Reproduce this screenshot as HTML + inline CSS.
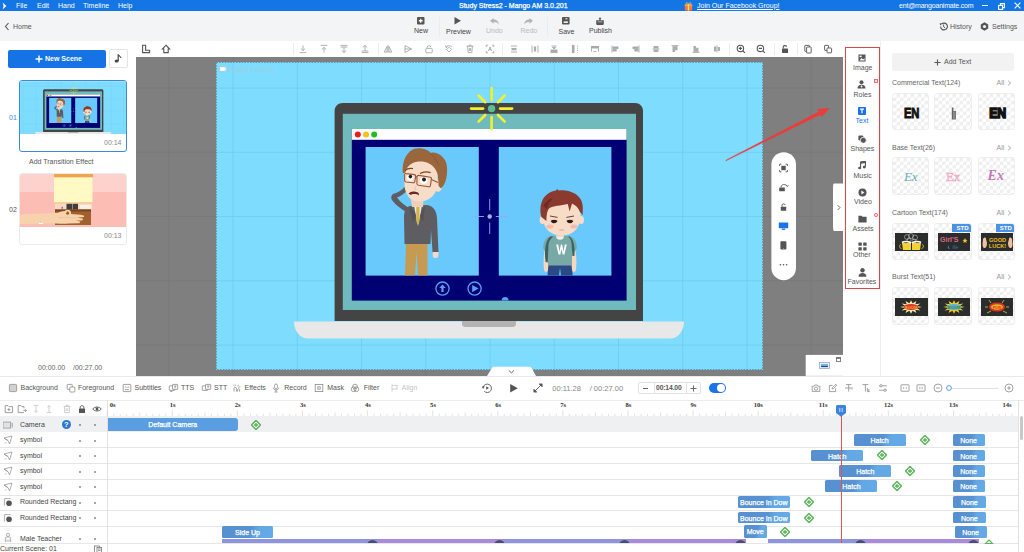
<!DOCTYPE html>
<html><head><meta charset="utf-8">
<style>
*{margin:0;padding:0;box-sizing:border-box}
html,body{width:1024px;height:552px;overflow:hidden;background:#fff;font-family:"Liberation Sans",sans-serif;color:#333}
.a{position:absolute}
.t{position:absolute;white-space:nowrap;line-height:1;margin-top:-0.5px}
#title{left:0;top:0;width:1024px;height:11px;background:#1475e5}
#title .t{color:#fff;font-size:7px;top:2px}
#tb{left:0;top:11px;width:1024px;height:30px;background:#f3f4f6}
#lp{left:0;top:41px;width:136px;height:335px;background:#fff}
#ctb{left:136px;top:41px;width:707px;height:16px;background:#fff}
#canvas{left:136px;top:57px;width:707px;height:319px;background:#7f7f7f;overflow:hidden}
#cat{left:843px;top:41px;width:37px;height:335px;background:#fff}
#lib{left:880px;top:41px;width:144px;height:335px;background:#fff;box-shadow:inset 0.8px 0 0 #ececec}
#ttb{left:0;top:376px;width:1024px;height:24px;background:#fff;box-shadow:inset 0 0.8px 0 #e4e4e4}
#tl{left:0;top:400px;width:1024px;height:152px;background:#fff;box-shadow:inset 0 0.8px 0 #e6e6e6}
.tile{width:37.3px;height:37.2px;border-radius:3px;overflow:hidden;border:0.5px solid #efefef;
background-color:#fff;background-image:linear-gradient(45deg,#eeeeee 25%,transparent 25%,transparent 75%,#eeeeee 75%),linear-gradient(45deg,#eeeeee 25%,transparent 25%,transparent 75%,#eeeeee 75%);background-size:7px 7px;background-position:0 0,3.5px 3.5px}
.std{left:17px;top:0;width:20.3px;height:8.6px;background:#4b92e3;color:#fff;font-size:6px;font-weight:bold;line-height:8.6px;text-align:center;border-radius:0 3px 0 0}
.bar{background:linear-gradient(105deg,#5890d0 0%,#5892d2 55%,#63a8e5 68%,#64aae6 100%);color:#fff;font-size:7px;-webkit-text-stroke:0.25px #fff;text-align:center;white-space:nowrap;overflow:hidden;border-radius:1.5px}
.cam{background:#5a9de1;border-radius:0 3px 3px 0}
</style></head><body>
<div id="title" class="a">
  <div class="t" style="left:16px">File</div>
  <div class="t" style="left:37px">Edit</div>
  <div class="t" style="left:58px">Hand</div>
  <div class="t" style="left:83px">Timeline</div>
  <div class="t" style="left:118px">Help</div>
  <div class="t" style="left:459px;-webkit-text-stroke:0.25px #fff">Study Stress2 - Mango AM 3.0.201</div>
  <div class="t" style="left:697px;text-decoration:underline">Join Our Facebook Group!</div>
  <div class="t" style="left:899px;letter-spacing:-0.2px">ent@mangoanimate.com</div>
  <svg class="a" style="left:2px;top:1.5px" width="5" height="8" viewBox="0 0 5 8"><path d="M0.6 0.4L4.4 4L0.6 7.6L1.6 4Z" fill="#fff"/></svg>
  <svg class="a" style="left:684px;top:0.5px" width="9" height="10" viewBox="0 0 9 10"><rect x="0.8" y="3.2" width="7.4" height="6.4" rx="1" fill="#f07a3a"/><rect x="0.8" y="3.2" width="7.4" height="2" fill="#f59a55"/><rect x="3.8" y="3" width="1.4" height="6.6" fill="#fce070"/><path d="M4.5 3C3 0.8 1.6 1.4 2.4 3M4.5 3C6 0.8 7.4 1.4 6.6 3" fill="none" stroke="#f7c040" stroke-width="0.8"/></svg>
  <div class="a" style="left:982px;top:5px;width:6.4px;height:1.1px;background:#fff"></div>
  <svg class="a" style="left:997.5px;top:2.5px" width="7" height="7" viewBox="0 0 7 7"><rect x="0.6" y="2.4" width="4" height="4" fill="none" stroke="#fff" stroke-width="1.1"/><path d="M2.4 2.4V0.6H6.4V4.6H4.6" fill="none" stroke="#fff" stroke-width="1.1"/></svg>
  <svg class="a" style="left:1014px;top:2.2px" width="7" height="7" viewBox="0 0 7 7"><path d="M0.6 0.6L6.4 6.4M6.4 0.6L0.6 6.4" stroke="#fff" stroke-width="1.2"/></svg>
</div>
<div id="tb" class="a">
  <svg class="a" style="left:4px;top:11px" width="6" height="9" viewBox="0 0 6 9"><path d="M4.5 1 L1.5 4.5 L4.5 8" fill="none" stroke="#555" stroke-width="1.1"/></svg>
  <div class="t" style="left:13px;top:12.5px;font-size:7px;color:#555">Home</div>
  <!-- New -->
  <svg class="a" style="left:417px;top:6px" width="8" height="8" viewBox="0 0 8 8"><rect x="0" y="0" width="7.5" height="7.5" rx="1" fill="#555"/><path d="M3.75 1.8V5.7M1.8 3.75H5.7" stroke="#fff" stroke-width="1.3"/></svg>
  <div class="t" style="left:414px;top:16.5px;font-size:7px;color:#444">New</div>
  <div class="a" style="left:439px;top:6px;width:1px;height:20px;background:#ebecef"></div>
  <svg class="a" style="left:454px;top:6px" width="8" height="8" viewBox="0 0 8 8"><path d="M0.5 0 L7 3.8 L0.5 7.6Z" fill="#555"/></svg>
  <div class="t" style="left:446px;top:17px;font-size:7px;color:#444">Preview</div>
  <svg class="a" style="left:490px;top:7px" width="9" height="7" viewBox="0 0 9 7"><path d="M0 2.8 L3.6 0 L3.6 1.6 C6.5 1.6 8.6 3 8.8 6.8 C7.8 4.8 6.3 4.1 3.6 4.1 L3.6 5.7Z" fill="#b4b4b4"/></svg>
  <div class="t" style="left:486px;top:16.5px;font-size:7px;color:#bbb">Undo</div>
  <svg class="a" style="left:524px;top:7px" width="9" height="7" viewBox="0 0 9 7"><path d="M9 2.8 L5.4 0 L5.4 1.6 C2.5 1.6 0.4 3 0.2 6.8 C1.2 4.8 2.7 4.1 5.4 4.1 L5.4 5.7Z" fill="#b4b4b4"/></svg>
  <div class="t" style="left:520.5px;top:16.5px;font-size:7px;color:#bbb">Redo</div>
  <div class="a" style="left:547px;top:6px;width:1px;height:20px;background:#ebecef"></div>
  <svg class="a" style="left:562px;top:5.8px" width="8" height="8" viewBox="0 0 8 8"><rect x="0" y="0" width="7.6" height="7.6" rx="1.1" fill="#555"/><rect x="1.7" y="4.4" width="4.2" height="1.5" fill="#fff"/><rect x="3.4" y="1" width="2" height="1.4" fill="#fff" opacity="0.7"/></svg>
  <div class="t" style="left:558.5px;top:17px;font-size:7px;color:#444">Save</div>
  <svg class="a" style="left:596px;top:6px" width="8" height="8" viewBox="0 0 8 8"><path d="M4 0.2L5.6 1.8H4.7V3.6H3.3V1.8H2.4Z" fill="#555"/><path d="M0.2 3.2H7.8V6.4C7.8 7.4 7.2 7.9 6.2 7.9H1.8C0.8 7.9 0.2 7.4 0.2 6.4Z" fill="#555"/><rect x="1.6" y="4.4" width="4.8" height="0.9" fill="#fff" opacity="0.6"/></svg>
  <div class="t" style="left:589px;top:16.5px;font-size:7px;color:#444">Publish</div>
  <!-- History / Settings -->
  <svg class="a" style="left:939px;top:11px" width="9" height="9" viewBox="0 0 9 9"><path d="M1.6 4.5 A3.4 3.4 0 1 0 2.6 2.1" fill="none" stroke="#555" stroke-width="1.1"/><path d="M0.6 1.2 L3.2 1.6 L1.4 3.6Z" fill="#555"/><path d="M4.6 2.6V4.7L6 5.8" fill="none" stroke="#555" stroke-width="1"/></svg>
  <div class="t" style="left:950px;top:12.3px;font-size:7px;color:#555">History</div>
  <svg class="a" style="left:980px;top:11px" width="9" height="9" viewBox="0 0 9 9"><path d="M4.5 0.3 L8.2 2.4 V6.6 L4.5 8.7 L0.8 6.6 V2.4Z" fill="#555"/><circle cx="4.5" cy="4.5" r="1.6" fill="#f3f4f6"/></svg>
  <div class="t" style="left:992px;top:12.3px;font-size:7px;color:#555">Settings</div>
</div>
<div id="lp" class="a">
  <div class="a" style="left:8px;top:9px;width:98px;height:17.6px;background:#1673e5;border-radius:2px"></div>
  <svg class="a" style="left:35px;top:13.5px" width="8" height="8" viewBox="0 0 8 8"><path d="M4 0.5V7.5M0.5 4H7.5" stroke="#fff" stroke-width="1.4"/></svg>
  <div class="t" style="left:45px;top:14.5px;font-size:7px;color:#fff;font-weight:bold">New Scene</div>
  <div class="a" style="left:109px;top:8px;width:19px;height:19px;background:#fff;border:1px solid #e4e4e4;border-radius:2px"></div>
  <svg class="a" style="left:114px;top:13px" width="8" height="9" viewBox="0 0 8 9"><path d="M4.2 0.5 C4.8 2 6.8 2.4 7 4" fill="none" stroke="#444" stroke-width="1.1"/><path d="M4.2 0.5V7" stroke="#444" stroke-width="1.2"/><ellipse cx="2.6" cy="7" rx="2" ry="1.6" fill="#444"/></svg>
  <div class="t" style="left:9px;top:73px;font-size:7px;color:#3a86e0">01</div>
  <div class="a" style="left:19px;top:39px;width:108px;height:72px;border:1px solid #3d89e0;border-radius:3px;overflow:hidden;background:#fff">
    <svg class="a" style="left:0;top:0" width="106" height="53" viewBox="216.7 62.8 542 267"><use href="#stage"/></svg>
    <div class="t" style="left:84px;top:58.5px;font-size:7px;color:#888">00:14</div>
  </div>
  <div class="t" style="left:29px;top:117.30px;font-size:7px;color:#555">Add Transition Effect</div>
  <div class="t" style="left:9px;top:165.5px;font-size:7px;color:#555">02</div>
  <div class="a" style="left:19px;top:132px;width:108px;height:72px;border:1px solid #ebebeb;border-radius:3px;overflow:hidden;background:#fff">
    <svg class="a" style="left:0;top:0" width="106" height="53" viewBox="0 0 106 53">
      <rect x="0" y="0" width="106" height="18" fill="#fdd2cd"/>
      <rect x="0" y="18" width="106" height="35" fill="#fcbdb4"/>
      <rect x="34" y="0" width="39" height="3.5" fill="#efa54a"/>
      <rect x="34" y="3.5" width="38.5" height="25" fill="#fff9c4"/>
      <rect x="34" y="28.5" width="38.5" height="1.3" fill="#f2c37a"/>
      <rect x="35" y="29.5" width="37" height="6" fill="#f9d9bf"/>
      <rect x="46.5" y="29.8" width="5.5" height="6" fill="#3d3d3f"/>
      <rect x="52.5" y="29.8" width="5.5" height="6" fill="#3d3d3f"/>
      <rect x="41.5" y="32.8" width="1.5" height="2" fill="#7a6ac8"/>
      <rect x="60" y="31" width="11" height="4" fill="#f4efe8"/>
      <rect x="35" y="35.5" width="36" height="15.5" fill="#a0602f"/>
      <rect x="35" y="35.5" width="36" height="2" fill="#7a4620"/>
      <path d="M0 40.5 C12 40 26 39.4 38 38.8 C41 37.4 44 36.6 46 37.2 L51 40 C55 40.2 60 40.6 63.6 41.4 C64.6 42 64.2 43.2 63 43.2 L57 43.4 L62.4 44.6 C63.4 45.2 63 46.4 61.8 46.4 L56 46.6 L60 47.6 C60.6 48.4 60 49.2 59 49.2 L48 49.6 C44 50 40 49.6 36 49.4 L0 50Z" fill="#f7d2ac"/>
      <circle cx="47.6" cy="39.2" r="2.6" fill="none" stroke="#f7d2ac" stroke-width="1.8"/>
      <circle cx="47.6" cy="39.2" r="1.5" fill="#a0602f"/>
      <path d="M38 44 C44 43 50 43.4 56 44.2" stroke="#e8b990" stroke-width="0.5" fill="none"/>
      <rect x="19" y="49" width="4" height="1" fill="#fff"/>
    </svg>
    <div class="t" style="left:84px;top:58.5px;font-size:7px;color:#888">00:13</div>
  </div>
  <div class="t" style="left:38px;top:323px;font-size:7px;color:#666">00:00.00</div>
  <div class="t" style="left:73px;top:323px;font-size:7px;color:#666">/00:27.00</div>
</div>
<div id="ctb" class="a"><svg class="a" style="left:4.5px;top:3.200000000000003px" width="10" height="10" viewBox="0 0 10 10"><g fill="none" stroke="#555" stroke-width="0.9"><path d="M1.6 1.2V8.6H8.6V6.2H4.6V1.2Z" stroke-width="1.1"/></g></svg><svg class="a" style="left:24.5px;top:3.200000000000003px" width="10" height="10" viewBox="0 0 10 10"><g fill="none" stroke="#555" stroke-width="0.9"><path d="M5 1.2L8.6 5H7.2V8.6H2.8V5H1.4Z" stroke-width="1.1"/></g></svg><svg class="a" style="left:162.39999999999998px;top:3.200000000000003px" width="10" height="10" viewBox="0 0 10 10"><g fill="none" stroke="#a8a8a8" stroke-width="0.9"><path d="M5 1.4V6.6M2.8 4.5L5 6.6L7.2 4.5M1.6 8.6H8.4"/></g></svg><svg class="a" style="left:183.0px;top:3.200000000000003px" width="10" height="10" viewBox="0 0 10 10"><g fill="none" stroke="#a8a8a8" stroke-width="0.9"><path d="M5 8.6V3.4M2.8 5.5L5 3.4L7.2 5.5M1.6 1.4H8.4"/></g></svg><svg class="a" style="left:202.7px;top:3.200000000000003px" width="10" height="10" viewBox="0 0 10 10"><g fill="none" stroke="#a8a8a8" stroke-width="0.9"><path d="M1.6 1.4H8.4M1.6 3H8.4M5 3V8.6M2.8 6.5L5 8.6L7.2 6.5"/></g></svg><svg class="a" style="left:223.8px;top:3.200000000000003px" width="10" height="10" viewBox="0 0 10 10"><g fill="none" stroke="#a8a8a8" stroke-width="0.9"><path d="M1.6 8.6H8.4M1.6 7H8.4M5 7V1.4M2.8 3.5L5 1.4L7.2 3.5"/></g></svg><svg class="a" style="left:247.3px;top:3.200000000000003px" width="10" height="10" viewBox="0 0 10 10"><g fill="none" stroke="#a8a8a8" stroke-width="0.9"><path d="M5 1V9M4 2.5L1.2 8H4ZM6 2.5L8.8 8H6Z"/></g></svg><svg class="a" style="left:267.4px;top:3.200000000000003px" width="10" height="10" viewBox="0 0 10 10"><g fill="none" stroke="#a8a8a8" stroke-width="0.9"><path d="M2 1.5L8.5 5L2 8.5ZM2 5H8.5"/></g></svg><svg class="a" style="left:287.6px;top:3.200000000000003px" width="10" height="10" viewBox="0 0 10 10"><g fill="none" stroke="#a8a8a8" stroke-width="0.9"><rect x="1.8" y="4.4" width="6.4" height="4.4" rx="0.6"/><path d="M3.2 4.4V3C3.2 1.2 6.8 1.2 6.8 3"/></g></svg><svg class="a" style="left:308.2px;top:3.200000000000003px" width="10" height="10" viewBox="0 0 10 10"><g fill="none" stroke="#a8a8a8" stroke-width="0.9"><path d="M5 3.2L7.4 5.6L5 8L2.6 5.6Z"/><path d="M2 3.4C3 1.4 6.4 1 8 3"/><path d="M1.4 1.4L2 3.4L3.6 2.8"/></g></svg><svg class="a" style="left:328.8px;top:3.200000000000003px" width="10" height="10" viewBox="0 0 10 10"><g fill="none" stroke="#a8a8a8" stroke-width="0.9"><path d="M1.6 2.2H8.4M2.6 2.2L3.2 8.6H6.8L7.4 2.2M4 2.2V1.2H6V2.2M4.4 4V7M5.6 4V7"/></g></svg><svg class="a" style="left:349.0px;top:3.200000000000003px" width="10" height="10" viewBox="0 0 10 10"><g fill="none" stroke="#a8a8a8" stroke-width="0.9"><path d="M1.2 3V1.2H3M7 1.2H8.8V3M8.8 7V8.8H7M3 8.8H1.2V7"/><path d="M3.4 7L5 3L6.6 7M4 5.6H6"/></g></svg><svg class="a" style="left:373.0px;top:3.200000000000003px" width="10" height="10" viewBox="0 0 10 10"><g fill="none" stroke="#a8a8a8" stroke-width="0.9"><path d="M2 2H8M2 8H8"/><rect x="3" y="4.4" width="4" height="1.4" fill="#a8a8a8"/></g></svg><svg class="a" style="left:393.70000000000005px;top:3.200000000000003px" width="10" height="10" viewBox="0 0 10 10"><g fill="none" stroke="#a8a8a8" stroke-width="0.9"><path d="M2 1.5V8.5M8 1.5V8.5"/><rect x="4.3" y="3" width="1.4" height="4" fill="#a8a8a8"/></g></svg><svg class="a" style="left:413.4px;top:3.200000000000003px" width="10" height="10" viewBox="0 0 10 10"><g fill="none" stroke="#a8a8a8" stroke-width="0.9"><path d="M2.5 2H7.5"/><path d="M3.5 3.4H6.5L5 5Z" fill="#a8a8a8"/><rect x="2" y="6" width="6" height="2" fill="#a8a8a8"/><path d="M1.5 8.6H8.5"/></g></svg><svg class="a" style="left:434.0px;top:3.200000000000003px" width="10" height="10" viewBox="0 0 10 10"><g fill="none" stroke="#a8a8a8" stroke-width="0.9"><path d="M2.4 1.4V8.6M7.6 1.4V8.6" stroke-dasharray="1.2 1"/><rect x="2.4" y="1.4" width="1.6" height="7.2" fill="#a8a8a8"/></g></svg><svg class="a" style="left:454.0px;top:3.200000000000003px" width="10" height="10" viewBox="0 0 10 10"><g fill="none" stroke="#a8a8a8" stroke-width="0.9"><path d="M1.5 2.6H8.5M1.5 2.6V7.6M8.5 2.6V7.6"/><rect x="1.5" y="2.4" width="7" height="1.6" fill="#a8a8a8"/><path d="M3.5 7.6H6.5"/></g></svg><svg class="a" style="left:474.29999999999995px;top:3.200000000000003px" width="10" height="10" viewBox="0 0 10 10"><g fill="none" stroke="#a8a8a8" stroke-width="0.9"><path d="M2 1.5V8.5"/><rect x="3" y="3" width="5" height="1.4" fill="#a8a8a8"/><rect x="3" y="5.6" width="3.2" height="1.4" fill="#a8a8a8"/></g></svg><svg class="a" style="left:494.5px;top:3.200000000000003px" width="10" height="10" viewBox="0 0 10 10"><g fill="none" stroke="#a8a8a8" stroke-width="0.9"><path d="M8 1.5V8.5"/><rect x="2" y="3" width="5" height="1.4" fill="#a8a8a8"/><rect x="3.8" y="5.6" width="3.2" height="1.4" fill="#a8a8a8"/></g></svg><svg class="a" style="left:514.8px;top:3.200000000000003px" width="10" height="10" viewBox="0 0 10 10"><g fill="none" stroke="#a8a8a8" stroke-width="0.9"><path d="M1.5 5H8.5"/><rect x="3" y="2.6" width="4" height="1.4" fill="#a8a8a8"/><rect x="3" y="6" width="4" height="1.4" fill="#a8a8a8"/></g></svg><svg class="a" style="left:534.3px;top:3.200000000000003px" width="10" height="10" viewBox="0 0 10 10"><g fill="none" stroke="#a8a8a8" stroke-width="0.9"><path d="M1.5 1.6H8.5"/><rect x="3" y="2.6" width="1.4" height="5" fill="#a8a8a8"/><rect x="5.6" y="2.6" width="1.4" height="3.2" fill="#a8a8a8"/></g></svg><svg class="a" style="left:555.4px;top:3.200000000000003px" width="10" height="10" viewBox="0 0 10 10"><g fill="none" stroke="#a8a8a8" stroke-width="0.9"><path d="M1.5 8.4H8.5"/><rect x="3" y="2.4" width="1.4" height="5" fill="#a8a8a8"/><rect x="5.6" y="4.2" width="1.4" height="3.2" fill="#a8a8a8"/></g></svg><svg class="a" style="left:575.8px;top:3.200000000000003px" width="10" height="10" viewBox="0 0 10 10"><g fill="none" stroke="#a8a8a8" stroke-width="0.9"><path d="M5 1.5V8.5"/><rect x="2.4" y="3" width="1.4" height="4" fill="#a8a8a8"/><rect x="6.2" y="3.6" width="1.4" height="2.8" fill="#a8a8a8"/></g></svg><svg class="a" style="left:600.0px;top:3.200000000000003px" width="10" height="10" viewBox="0 0 10 10"><g fill="none" stroke="#555" stroke-width="0.9"><circle cx="4.4" cy="4.4" r="3.2" stroke-width="1.1"/><path d="M6.8 6.8L8.9 8.9M2.8 4.4H6M4.4 2.8V6" stroke-width="1.1"/></g></svg><svg class="a" style="left:620.0px;top:3.200000000000003px" width="10" height="10" viewBox="0 0 10 10"><g fill="none" stroke="#555" stroke-width="0.9"><circle cx="4.4" cy="4.4" r="3.2" stroke-width="1.1"/><path d="M6.8 6.8L8.9 8.9M2.8 4.4H6" stroke-width="1.1"/></g></svg><svg class="a" style="left:644.0px;top:3.200000000000003px" width="10" height="10" viewBox="0 0 10 10"><g fill="none" stroke="#555" stroke-width="0.9"><rect x="2" y="4.6" width="6" height="4.4" rx="0.5" fill="#555" stroke="none"/><path d="M3.2 4.6V3C3.2 1.2 6.4 1.2 6.6 2.6" stroke-width="1.1"/></g></svg><svg class="a" style="left:667.0px;top:3.200000000000003px" width="10" height="10" viewBox="0 0 10 10"><g fill="none" stroke="#555" stroke-width="0.9"><rect x="1.8" y="1.4" width="4.6" height="6" rx="0.5"/><rect x="3.6" y="3" width="4.6" height="6" rx="0.5" fill="#fff"/></g></svg><svg class="a" style="left:687.0px;top:3.200000000000003px" width="10" height="10" viewBox="0 0 10 10"><g fill="none" stroke="#555" stroke-width="0.9"><rect x="1.6" y="1.4" width="4" height="5" rx="0.5"/><rect x="4" y="4" width="4.6" height="4.8" rx="0.6" fill="#fff"/></g></svg><div class="a" style="left:157px;top:2px;width:1px;height:12px;background:#ececec"></div><div class="a" style="left:242px;top:2px;width:1px;height:12px;background:#ececec"></div><div class="a" style="left:366px;top:2px;width:1px;height:12px;background:#ececec"></div><div class="a" style="left:592.5px;top:2px;width:1px;height:12px;background:#ececec"></div><div class="a" style="left:637.6px;top:2px;width:1px;height:12px;background:#ececec"></div><div class="a" style="left:661px;top:2px;width:1px;height:12px;background:#ececec"></div></div>
<div id="canvas" class="a">
 <svg class="a" style="left:0;top:0" width="707" height="319" viewBox="136 57 707 319">
  <g stroke="#777" stroke-width="0.8"><line x1="168.75" y1="57" x2="168.75" y2="376"/><line x1="233.0" y1="57" x2="233.0" y2="376"/><line x1="297.25" y1="57" x2="297.25" y2="376"/><line x1="361.5" y1="57" x2="361.5" y2="376"/><line x1="425.75" y1="57" x2="425.75" y2="376"/><line x1="490.0" y1="57" x2="490.0" y2="376"/><line x1="554.25" y1="57" x2="554.25" y2="376"/><line x1="618.5" y1="57" x2="618.5" y2="376"/><line x1="682.75" y1="57" x2="682.75" y2="376"/><line x1="747.0" y1="57" x2="747.0" y2="376"/><line x1="811.25" y1="57" x2="811.25" y2="376"/><line x1="136" y1="88.0" x2="843" y2="88.0"/><line x1="136" y1="152.25" x2="843" y2="152.25"/><line x1="136" y1="216.5" x2="843" y2="216.5"/><line x1="136" y1="280.75" x2="843" y2="280.75"/><line x1="136" y1="345.0" x2="843" y2="345.0"/></g>
  <g id="stage">
   <rect x="216" y="62" width="547" height="308" fill="#7edcfe"/>
   <g stroke="#6fcbee" stroke-width="0.8"><line x1="233.0" y1="62" x2="233.0" y2="370"/><line x1="297.25" y1="62" x2="297.25" y2="370"/><line x1="361.5" y1="62" x2="361.5" y2="370"/><line x1="425.75" y1="62" x2="425.75" y2="370"/><line x1="490.0" y1="62" x2="490.0" y2="370"/><line x1="554.25" y1="62" x2="554.25" y2="370"/><line x1="618.5" y1="62" x2="618.5" y2="370"/><line x1="682.75" y1="62" x2="682.75" y2="370"/><line x1="747.0" y1="62" x2="747.0" y2="370"/><line x1="216" y1="88.0" x2="763" y2="88.0"/><line x1="216" y1="152.25" x2="763" y2="152.25"/><line x1="216" y1="216.5" x2="763" y2="216.5"/><line x1="216" y1="280.75" x2="763" y2="280.75"/><line x1="216" y1="345.0" x2="763" y2="345.0"/></g>
   <!-- laptop -->
   <path d="M294 321.5 H684 C684 331 678 338.5 670 338.5 H308 C300 338.5 294 331 294 321.5Z" fill="#e8e8e8"/>
   <path d="M462 321 H516 V324 C516 326 514.5 327 512.5 327 H465.5 C463.5 327 462 326 462 324Z" fill="#b3b3b3"/>
   <path d="M343 103 H635 C639.5 103 643 106.5 643 111 V321 H334.6 V111 C334.6 106.5 338 103 343 103Z" fill="#444444"/>
   <rect x="342.8" y="113.8" width="293.2" height="196.2" fill="#6fbabd"/>
   <rect x="351.8" y="129" width="274.8" height="171.6" fill="#000073"/>
   <rect x="351.8" y="129" width="274.8" height="10.8" fill="#ffffff"/>
   <circle cx="357.8" cy="134.4" r="3" fill="#ee1c1c"/>
   <circle cx="366" cy="134.4" r="3" fill="#f5c21a"/>
   <circle cx="374.2" cy="134.4" r="3" fill="#22bb22"/>
   <rect x="365.6" y="147" width="113.2" height="128.6" fill="#69c9fd"/>
   <rect x="498.8" y="147" width="112.6" height="128.6" fill="#69c9fd"/>
   <g stroke="#5b9ef2" stroke-width="1.3" fill="none"><circle cx="442.5" cy="288.6" r="6.6"/><circle cx="474.6" cy="288.6" r="6.6"/></g>
   <path d="M442.5 284.5 L445.6 288 H443.6 V292 H441.4 V288 H439.4Z" fill="#5b9ef2"/>
   <path d="M472.2 285 L478.6 288.6 L472.2 292.2Z" fill="#5b9ef2"/>
   <path d="M501.6 300.6 A3.5 3.5 0 0 1 508.6 300.6Z" fill="#5b9ef2"/>
   <g stroke="#f3f02e" stroke-width="2.6" stroke-linecap="round"><line x1="500.10" y1="108.60" x2="512.10" y2="108.60"/><line x1="497.96" y1="114.96" x2="504.68" y2="121.68"/><line x1="491.60" y1="117.10" x2="491.60" y2="129.10"/><line x1="485.24" y1="114.96" x2="478.52" y2="121.68"/><line x1="483.10" y1="108.60" x2="471.10" y2="108.60"/><line x1="485.24" y1="102.24" x2="478.52" y2="95.52"/><line x1="491.60" y1="100.10" x2="491.60" y2="88.10"/><line x1="497.96" y1="102.24" x2="504.68" y2="95.52"/></g>
   <circle cx="491.6" cy="108.6" r="3.7" fill="#5cbf90"/>
   <!-- crosshair -->
   <g stroke="#9aa6ee" stroke-width="0.9"><line x1="489.7" y1="199" x2="489.7" y2="210.4"/><line x1="489.7" y1="222.6" x2="489.7" y2="234"/><line x1="472.2" y1="216.5" x2="484" y2="216.5"/><line x1="495.8" y1="216.5" x2="507.6" y2="216.5"/></g>
   <circle cx="489.7" cy="216.5" r="2.2" fill="#a8b0e6"/>
   <!-- teacher -->
   <g>
    <path d="M405 275.6 L406 243 H427.5 L427.5 275.6 H418 L416.5 252 L415 275.6Z" fill="#c69a50"/>
    <path d="M408 213 C403 210 395 205 392 200 C390.4 197 391.6 194 394.6 193.4 C398 192.6 402 190 405 186.6 L407.6 190 C404.6 193.6 400 196.6 397 197.6 C400 202 405 206 411 209Z" fill="#5e5e62"/>
    <path d="M410 206 L427 205 C433 206 436.5 210 437 218 L438.5 252.5 L432.6 253 L431 230 L430.5 244 H404.5 L404 218 C404 210 406 207 410 206Z" fill="#5e5e62"/>
    <path d="M414 205.5 L422 205 L420 216 L418 226 L416 216Z" fill="#f2ede6"/>
    <path d="M416.3 207 L419.6 207 L419.4 221 L417.8 224.5 L416.2 221Z" fill="#d4b24a"/>
    <path d="M409 206 L416 215 L413 222Z M425 205.5 L420 216 L423 222Z" fill="#535357"/>
    <path d="M432.6 252 H438.6 L438.2 257 C436.6 258.6 433.6 258.4 432.8 256.4Z" fill="#f4dac6"/>
    <path d="M410 194 L424 194 L423 207 L412 207Z" fill="#f0cfb8"/>
    <path d="M434.5 181 C439 177 443.5 180 442.5 186.5 C441.6 191.5 437.6 193 434.6 190.6Z" fill="#f7dcc8"/>
    <path d="M404 168 C404.5 162 410 158 420 158 C430 158 437.6 163 437.8 172 L437.2 186 C436 195 429 201.6 419 201.6 C411 201.6 406 196 404.6 187Z" fill="#f7dcc8"/>
    <path d="M402.8 173 C402.2 166 403.6 158 408 153.4 C411 149.6 416 147.6 422 148.6 C426 149.2 429 151 431 153 C435 151.6 440 154 443 157.6 C446.6 161 447.6 167 447 173 C446.6 180 444.6 185 441 188.6 L438.6 186 L438 176 C437 171 434 166 429 163.6 C424 161 417 161 412 163.4 C408 165.4 406 168.6 405.2 173Z" fill="#9a663c"/>
    <path d="M430.4 153.4 C434 156 437 160 438.6 166" fill="none" stroke="#80502c" stroke-width="0.6"/>
    <ellipse cx="410.2" cy="177.6" rx="3.4" ry="3.1" fill="#fff"/><ellipse cx="423.8" cy="180.6" rx="3.8" ry="3.3" fill="#fff"/>
    <circle cx="410.4" cy="176.6" r="1.8" fill="#1f1f1f"/><circle cx="424" cy="179.6" r="2" fill="#1f1f1f"/>
    <g fill="none" stroke="#9a5535" stroke-width="1.1"><path d="M404.6 174.6 C404.6 173.6 405.4 173.4 406.4 173.6 L414.4 174.6 C415.4 174.8 415.8 175.4 415.6 176.4 L414.8 181.6 C414.6 182.6 414 183 413 182.8 L406 182 C405 181.8 404.6 181.2 404.6 180.2Z"/><path d="M417 176.6 C417.2 175.6 418 175.2 419 175.4 L430.2 177.2 C431.2 177.4 431.6 178 431.4 179 L430.4 185.6 C430.2 186.6 429.6 187 428.6 186.8 L418.4 185.2 C417.4 185 416.8 184.4 416.9 183.4Z"/><path d="M415.6 176.6 L417 177 M431.4 179.6 L438 182.4"/></g>
    <path d="M405 170.6 C407 168.6 410 168 413 168.6 M420 173.6 C423 171.6 427 171.4 430.6 172.6" fill="none" stroke="#7a4626" stroke-width="1.2"/>
    <path d="M408.6 193.6 C410.6 191 415 190.8 418.6 193 L419 195.4 C417 194 414 193.6 411.6 194.4 C410.4 194.8 409.4 194.8 408.6 193.6Z" fill="#6a2a22"/>
    <path d="M416 186 L414.6 189.4 L416.6 189.6" fill="none" stroke="#dcb39a" stroke-width="0.6"/>
   </g>
   <!-- boy -->
   <g>
    <path d="M548 263 H572 L572.6 275.6 H561 L560 268 L559 275.6 H547.6Z" fill="#2b4a85"/>
    <path d="M545.6 246 C543.6 253 543.2 262 544 270 C544.6 272.6 547.6 272.6 548 270 L549.4 252Z" fill="#f5d6c0"/>
    <path d="M574.4 246 C576.4 253 576.8 262 576 270 C575.4 272.6 572.4 272.6 572 270 L570.6 252Z" fill="#f5d6c0"/>
    <path d="M550 236 H570 C574 237.6 576.6 241 577 248 L574 252.6 L572 250 L572 265.4 H548 L548 250 L546 252.6 L543 248 C543.6 241 546 237.6 550 236Z" fill="#78a9a7"/>
    <path d="M550.5 236.6 C545.6 240 544 250 545.6 262 L547.8 262.4 L548.4 246 C548.6 241 551 238 553.4 236.4Z" fill="#3a6361"/>
    <path d="M569.6 236.4 C573.4 239 575.2 246 574.4 256 L572.4 256 L571.6 244 C571.2 240 570 238 568 236.6Z" fill="#3a6361"/>
    <path d="M556 235.6 L564 235.6 L563.4 238.6 C561.6 240.2 558.6 240.2 556.6 238.6Z" fill="#f2ede6"/>
    <path d="M556.20 244.60 L558.21 244.60 L559.49 251.60 L560.86 244.60 L562.14 244.60 L563.51 251.60 L564.79 244.60 L566.80 244.60 L564.47 254.60 L562.67 254.60 L561.50 248.85 L560.33 254.60 L558.53 254.60Z" fill="#fff"/>
    <path d="M557 229 H563.4 V236.6 H557Z" fill="#f0cfb8"/>
    <path d="M543 212 C543 203 550 198 561.5 198 C573 198 580.6 203 580.6 213 C581 224 577 235.2 562 235.4 C547.6 235.2 543 226 543 216Z" fill="#f9dcc6"/>
    <ellipse cx="542.6" cy="220" rx="3" ry="4" fill="#f9dcc6"/>
    <ellipse cx="581.2" cy="220" rx="2.8" ry="4" fill="#f9dcc6"/>
    <ellipse cx="550" cy="226.6" rx="3.6" ry="2" fill="#f6b9b0"/><ellipse cx="574" cy="226.6" rx="3.6" ry="2" fill="#f6b9b0"/>
    <path d="M541.4 217 C538.4 205 542.6 193 556 190.6 L557 189 L558.6 190.4 C571 189.6 583 195 582.8 208 L582.6 215 L579.6 211.6 C578.6 207.6 575.6 205 572 203.4 L569.6 211.4 L567.8 204 C561 205.6 553 205.8 549 208.4 C547 211 546.4 215 546.4 221Z" fill="#8a3a2e"/>
    <path d="M543.4 206 C545 201.6 549 199 553 198.4 C549.6 201 547.6 205 547.2 209Z" fill="#6e2a22"/>
    <path d="M550.6 220.8 C552.4 219.4 555.6 219.4 557.6 220.8 C556.8 222.8 555 223.4 553.6 223.2 C552.2 223 551.2 222.2 550.6 220.8Z" fill="#2a1d1a"/>
    <path d="M566.4 220.8 C568.4 219.4 571.6 219.4 573.4 220.8 C572.8 222.2 571.8 223 570.4 223.2 C569 223.4 567.2 222.8 566.4 220.8Z" fill="#2a1d1a"/>
    <path d="M550.2 220.6 C552.6 218.6 556 218.6 558 220.6 M566 220.6 C568 218.6 571.4 218.6 573.8 220.6" fill="none" stroke="#f7d2bd" stroke-width="0.7"/>
    <path d="M550 216 L557.6 217.4 M566.4 217.4 L574 216" stroke="#5a2c22" stroke-width="0.9"/>
    <path d="M559.4 230 H564" stroke="#d9958a" stroke-width="0.8"/>
   </g>
  </g>
  <rect x="216.4" y="62.4" width="546.2" height="307.2" fill="none" stroke="#5d8797" stroke-width="0.9" stroke-dasharray="1.6 1.2"/>
  <path d="M219.6 66.8 H225 L226.4 68.2 V70 L225 71.3 H219.6Z" fill="#ffffff" stroke="#9ab" stroke-width="0.4"/>
  <text x="228" y="72.4" font-family="Liberation Sans" font-size="6.6" fill="#9fcfe0">Default Camera</text>
  <!-- red arrow -->
  <path d="M726.04 160.77 L820.41 114.38 L821.63 116.79 L829.10 108.30 L817.83 109.29 L819.05 111.70 L725.76 160.23Z" fill="#ef3a3a" stroke="#ef3a3a" stroke-width="0.4" stroke-linejoin="round"/>
  <!-- floating toolbar -->
  <rect x="771.4" y="152.2" width="24.6" height="128" rx="12.3" fill="#fff"/>
  <path d="M834 183.5 H843 V231 H834 C833 231 833 227 833 224 V190 C833 187 833 183.5 834 183.5Z" fill="#fff"/>
  <path d="M837.6 205.2 L840 207.6 L837.6 210" fill="none" stroke="#555" stroke-width="0.9"/>

  <g fill="none" stroke="#555" stroke-width="0.9">
   <path d="M779.6 166V164.2H781.4M785.6 164.2H787.4V166M787.4 170V171.8H785.6M781.4 171.8H779.6V170"/>
  </g>
  <rect x="781.3" y="165.8" width="4.4" height="4.4" fill="#555"/>
  <rect x="779.2" y="187.4" width="5.6" height="3.8" rx="0.5" fill="#555"/>
  <path d="M781 187.2C781 184 786 183.6 787 186.2" fill="none" stroke="#555" stroke-width="0.9"/>
  <path d="M786 185L787.4 186.6L788.4 185" fill="none" stroke="#555" stroke-width="0.7"/>
  <rect x="780.8" y="206.8" width="5.4" height="3.9" rx="0.5" fill="#555"/>
  <path d="M782 206.8V205.3C782 203.4 785 203.4 785.2 205" fill="none" stroke="#555" stroke-width="0.9"/>
  <rect x="778.8" y="222.4" width="9.4" height="5.8" rx="0.4" fill="#1a73e8"/>
  <rect x="781.8" y="228.6" width="3.4" height="1.3" fill="#1a73e8"/>
  <rect x="780.4" y="241.2" width="6" height="8.4" rx="0.8" fill="#555"/>
  <circle cx="783.4" cy="248.2" r="0.45" fill="#ccc"/>
  <circle cx="780.4" cy="264.8" r="0.8" fill="#555"/><circle cx="783.5" cy="264.8" r="0.8" fill="#555"/><circle cx="786.6" cy="264.8" r="0.8" fill="#555"/>
  <rect x="805.7" y="354.9" width="37.5" height="21" fill="#fff"/>
  <rect x="819.5" y="362.4" width="10" height="6" fill="#e6f2fc" stroke="#8aa0b4" stroke-width="0.7"/>
  <rect x="821" y="364" width="7" height="3" fill="#6fb0ee"/>
  <rect x="821" y="366.2" width="7" height="0.9" fill="#1a2a6a"/>
  <rect x="836.4" y="357.6" width="4.2" height="3.8" fill="none" stroke="#666" stroke-width="0.8"/>
  <rect x="836.4" y="357.6" width="4.2" height="1.2" fill="#666"/>
  <path d="M487 376 L491.6 368.4 C492.2 367.2 493 366.7 494.5 366.7 H529 C530.5 366.7 531.3 367.2 531.9 368.4 L536 376Z" fill="#fff"/>
  <path d="M508.8 370.4L511.4 372.8L514 370.4" fill="none" stroke="#555" stroke-width="0.9"/>
 </svg>
</div>
<div id="cat" class="a">
  <div class="a" style="left:2.4px;top:6.4px;width:35px;height:242px;border:1.3px solid #d9464e"></div>
  <svg class="a" style="left:14.5px;top:12.5px" width="8" height="8" viewBox="0 0 8 8"><rect x="0.5" y="0.5" width="7" height="7" fill="#555"/><path d="M1.5 6.5L3.5 4L5 5.5L6.5 4V6.5Z" fill="#fff"/><rect x="1.6" y="1.6" width="2" height="1.6" fill="#fff"/></svg>
  <div class="t" style="left:10px;top:23.5px;font-size:7px;color:#555">Image</div>
  <svg class="a" style="left:14px;top:39px" width="9" height="9" viewBox="0 0 9 9"><circle cx="4.5" cy="2.2" r="2" fill="#555"/><path d="M0.5 8.6C0.5 6 2 4.8 4.5 4.8C7 4.8 8.5 6 8.5 8.6Z" fill="#555"/><path d="M4.5 5L3.8 6.2L4.5 8L5.2 6.2Z" fill="#fff"/></svg>
  <div class="t" style="left:10.5px;top:50.5px;font-size:7px;color:#555">Roles</div>
  <svg class="a" style="left:30.8px;top:38px" width="4" height="4" viewBox="0 0 4 4"><rect x="0.5" y="0.5" width="3" height="3" fill="#fbe0e2" stroke="#e2525a" stroke-width="0.8"/></svg>
  <svg class="a" style="left:14.5px;top:66px" width="8" height="8" viewBox="0 0 8 8"><rect x="0" y="0" width="8" height="8" rx="0.8" fill="#1a73e8"/><path d="M2 2.2H6M4 2.2V6.2" stroke="#fff" stroke-width="1.2"/></svg>
  <div class="t" style="left:12.5px;top:76.5px;font-size:7px;color:#1a73e8">Text</div>
  <svg class="a" style="left:14.5px;top:93.5px" width="9" height="9" viewBox="0 0 9 9"><rect x="0.4" y="0.4" width="5" height="5" rx="1.2" fill="#555"/><circle cx="5.3" cy="5.3" r="3" fill="#555" stroke="#fff" stroke-width="0.8"/></svg>
  <div class="t" style="left:7.5px;top:104px;font-size:7px;color:#555">Shapes</div>
  <svg class="a" style="left:15px;top:120px" width="8" height="9" viewBox="0 0 8 9"><path d="M2.6 6.8V1L7.4 0.2V5.8" fill="none" stroke="#555" stroke-width="1.1"/><path d="M2.6 1L7.4 0.2V2L2.6 2.8Z" fill="#555"/><ellipse cx="1.6" cy="7" rx="1.5" ry="1.3" fill="#555"/><ellipse cx="6.3" cy="6.1" rx="1.5" ry="1.3" fill="#555"/></svg>
  <div class="t" style="left:10.5px;top:131px;font-size:7px;color:#555">Music</div>
  <svg class="a" style="left:14.5px;top:147px" width="9" height="9" viewBox="0 0 9 9"><circle cx="4.5" cy="4.5" r="4" fill="#555"/><path d="M3.4 2.6L6.4 4.5L3.4 6.4Z" fill="#fff"/></svg>
  <div class="t" style="left:11px;top:157.5px;font-size:7px;color:#555">Video</div>
  <svg class="a" style="left:14.5px;top:174px" width="9" height="8" viewBox="0 0 9 8"><path d="M0.4 0.8H3.6L4.4 1.8H8.6V7.6H0.4Z" fill="#555"/></svg>
  <div class="t" style="left:9.5px;top:184.5px;font-size:7px;color:#555">Assets</div>
  <svg class="a" style="left:30.5px;top:171.5px" width="4" height="4" viewBox="0 0 4 4"><circle cx="2" cy="2" r="1.6" fill="#fbe0e2" stroke="#e2525a" stroke-width="0.8"/></svg>
  <svg class="a" style="left:14.5px;top:200.5px" width="9" height="9" viewBox="0 0 9 9"><rect x="0.4" y="0.4" width="3.4" height="3.4" rx="0.5" fill="#555"/><rect x="5.2" y="0.4" width="3.4" height="3.4" rx="0.5" fill="#555"/><rect x="0.4" y="5.2" width="3.4" height="3.4" rx="0.5" fill="#555"/><rect x="5.2" y="5.2" width="3.4" height="3.4" rx="0.5" fill="#555"/></svg>
  <div class="t" style="left:10px;top:210.5px;font-size:7px;color:#555">Other</div>
  <svg class="a" style="left:14.5px;top:226.5px" width="9" height="9" viewBox="0 0 9 9"><circle cx="4.5" cy="2.3" r="2.2" fill="#555"/><path d="M0.6 8.8C0.6 6.2 2.2 5 4.5 5C6.8 5 8.4 6.2 8.4 8.8Z" fill="#555"/></svg>
  <div class="t" style="left:4.5px;top:237.5px;font-size:7px;color:#555">Favorites</div>
</div>
<div id="lib" class="a"><div class="a" style="left:11.8px;top:11.6px;width:122.6px;height:18.3px;background:#f2f2f3;border-radius:2px"></div><svg class="a" style="left:53.5px;top:17.5px" width="7" height="7" viewBox="0 0 7 7"><path d="M3.5 0.4V6.6M0.4 3.5H6.6" stroke="#555" stroke-width="1.1"/></svg><div class="t" style="left:64px;top:17.3px;font-size:7px;color:#555">Add Text</div><div class="t" style="left:12px;top:38.80px;font-size:7px;color:#666">Commercial Text(124)</div><div class="t" style="left:116.5px;top:38.80px;font-size:7px;color:#999">All</div><svg class="a" style="left:127px;top:39.30px" width="5" height="6" viewBox="0 0 5 6"><path d="M1.2 0.8L3.6 3L1.2 5.2" fill="none" stroke="#999" stroke-width="0.9"/></svg><div class="t" style="left:12px;top:103.40px;font-size:7px;color:#666">Base Text(26)</div><div class="t" style="left:116.5px;top:103.40px;font-size:7px;color:#999">All</div><svg class="a" style="left:127px;top:103.90px" width="5" height="6" viewBox="0 0 5 6"><path d="M1.2 0.8L3.6 3L1.2 5.2" fill="none" stroke="#999" stroke-width="0.9"/></svg><div class="t" style="left:12px;top:168.40px;font-size:7px;color:#666">Cartoon Text(174)</div><div class="t" style="left:116.5px;top:168.40px;font-size:7px;color:#999">All</div><svg class="a" style="left:127px;top:168.90px" width="5" height="6" viewBox="0 0 5 6"><path d="M1.2 0.8L3.6 3L1.2 5.2" fill="none" stroke="#999" stroke-width="0.9"/></svg><div class="t" style="left:12px;top:232.80px;font-size:7px;color:#666">Burst Text(51)</div><div class="t" style="left:116.5px;top:232.80px;font-size:7px;color:#999">All</div><svg class="a" style="left:127px;top:233.30px" width="5" height="6" viewBox="0 0 5 6"><path d="M1.2 0.8L3.6 3L1.2 5.2" fill="none" stroke="#999" stroke-width="0.9"/></svg><div class="a tile" style="left:11.9px;top:52.2px"><div class="t" style="left:5px;top:12px;width:27px;text-align:center;font-size:14px;font-weight:bold;color:#111;transform:scaleX(0.8);letter-spacing:-0.3px;-webkit-text-stroke:0.9px #111">EN</div></div><div class="a tile" style="left:54.4px;top:52.2px"><svg class="a" style="left:16px;top:12.5px" width="6" height="13" viewBox="0 0 6 13"><rect x="0.8" y="0.5" width="1.6" height="12" fill="#666"/><rect x="2" y="4" width="3" height="8.5" fill="#777"/><path d="M2.5 5V12M3.6 5V12" stroke="#aaa" stroke-width="0.4"/></svg></div><div class="a tile" style="left:97.6px;top:52.2px"><div class="t" style="left:4px;top:12px;width:29px;text-align:center;font-size:14.5px;font-weight:bold;color:#111;-webkit-text-stroke:1.6px #111;letter-spacing:-0.5px;transform:scaleX(0.85)">EN</div></div><div class="a tile" style="left:11.9px;top:116.4px"><div class="t" style="left:11px;top:12px;font-family:'Liberation Serif',serif;font-style:italic;font-size:13px;color:#6aa9bd">Ex</div></div><div class="a tile" style="left:54.4px;top:116.4px"><div class="t" style="left:10.5px;top:12px;font-family:'Liberation Serif',serif;font-size:13px;color:#fce4ee;-webkit-text-stroke:0.6px #f0a6c4">Ex</div></div><div class="a tile" style="left:97.6px;top:116.4px"><div class="t" style="left:9px;top:11.5px;font-family:'Liberation Serif',serif;font-style:italic;font-weight:bold;font-size:14px;color:#c77ab6">Ex</div></div><div class="a tile" style="left:11.9px;top:181.5px"><div class="a" style="left:2.5px;top:9.4px;width:32.3px;height:18.1px;background:#2b2c2c;overflow:hidden"><svg width="33" height="18" viewBox="0 0 33 18"><g fill="none" stroke="#ddd" stroke-width="0.5"><circle cx="12" cy="4" r="2.5"/><circle cx="16" cy="3" r="2.5"/><circle cx="20" cy="4.5" r="2.5"/><circle cx="14" cy="7" r="2"/><circle cx="19" cy="8" r="2"/></g><path d="M7 10H16V17H8Z" fill="#f4d23a"/><path d="M17 10H26L25 17H17Z" fill="#f4d23a"/><path d="M7 9.5C9 8 14 8 16 10M17 10C19 8 24 8 26 9.5" stroke="#fff" stroke-width="1.6" fill="none"/><path d="M6 11.5C4 12 4 15 6.5 15.5M27 11.5C29 12 29 15 26.5 15.5" stroke="#f4d23a" stroke-width="0.8" fill="none"/></svg></div></div><div class="a tile" style="left:54.4px;top:181.5px"><div class="a" style="left:2.5px;top:9.4px;width:32.3px;height:18.1px;background:#2b2c2c;overflow:hidden"><svg width="33" height="18" viewBox="0 0 33 18"><text x="2" y="9" font-family="Liberation Sans" font-weight="bold" font-size="7" fill="#d96a8a">Girl&#39;S</text><path d="M27 5L27.8 6.8L29.6 7L28.2 8.1L28.6 10L27 9L25.4 10L25.8 8.1L24.4 7L26.2 6.8Z" fill="#f2c230"/><path d="M11 12.5C9 13.5 9.5 16 12 16C10.5 15 10.5 13.5 11 12.5Z" fill="#3a8ad8"/><text x="14.5" y="16" font-family="Liberation Sans" font-size="5.5" fill="#3a6fb8">ife</text></svg></div><div class="a std">STD</div></div><div class="a tile" style="left:97.6px;top:181.5px"><div class="a" style="left:2.5px;top:9.4px;width:32.3px;height:18.1px;background:#2b2c2c;overflow:hidden"><svg width="33" height="18" viewBox="0 0 33 18"><path d="M2 6C3 4 5 4 5 6L6 10C6 13 5 15 3.5 15C2 15 1.5 13 1.5 11Z" fill="#f2c2a0"/><path d="M31 6C30 4 28 4 28 6L27 10C27 13 28 15 29.5 15C31 15 31.5 13 31.5 11Z" fill="#f2c2a0"/><text x="16.5" y="8.5" text-anchor="middle" font-family="Liberation Sans" font-weight="bold" font-size="5.6" fill="#f0c020">GOOD</text><text x="16.5" y="15" text-anchor="middle" font-family="Liberation Sans" font-weight="bold" font-size="5.6" fill="#f0c020">LUCK!</text></svg></div><div class="a std">STD</div></div><div class="a tile" style="left:11.9px;top:246.39999999999998px"><div class="a" style="left:2.5px;top:9.4px;width:32.3px;height:18.1px;background:#2b2c2c;overflow:hidden"><svg width="33" height="18" viewBox="0 0 33 18"><polygon points="26.9,9.0 21.9,10.0 25.4,12.4 20.3,11.7 21.4,14.9 17.6,12.7 16.0,15.8 14.4,12.7 10.6,14.9 11.7,11.7 6.6,12.4 10.1,10.0 5.1,9.0 10.1,8.0 6.6,5.6 11.7,6.3 10.6,3.1 14.4,5.3 16.0,2.2 17.6,5.3 21.4,3.1 20.3,6.3 25.4,5.6 21.9,8.0" fill="#f5e6a8"/><ellipse cx="16" cy="9" rx="7.5" ry="3" fill="#d8342a"/><text x="16" y="10.5" text-anchor="middle" font-family="Liberation Sans" font-weight="bold" font-size="4" fill="#f0b020">BOOM</text></svg></div></div><div class="a tile" style="left:54.4px;top:246.39999999999998px"><div class="a" style="left:2.5px;top:9.4px;width:32.3px;height:18.1px;background:#2b2c2c;overflow:hidden"><svg width="33" height="18" viewBox="0 0 33 18"><polygon points="26.9,9.0 21.9,10.0 25.4,12.4 20.3,11.7 21.4,14.9 17.6,12.7 16.0,15.8 14.4,12.7 10.6,14.9 11.7,11.7 6.6,12.4 10.1,10.0 5.1,9.0 10.1,8.0 6.6,5.6 11.7,6.3 10.6,3.1 14.4,5.3 16.0,2.2 17.6,5.3 21.4,3.1 20.3,6.3 25.4,5.6 21.9,8.0" fill="#f0c828"/><ellipse cx="16" cy="9" rx="7.5" ry="3" fill="#5ab0d8"/><text x="16" y="10.5" text-anchor="middle" font-family="Liberation Sans" font-weight="bold" font-size="4" fill="#3a8a3a">BOOM</text></svg></div></div><div class="a tile" style="left:97.6px;top:246.39999999999998px"><div class="a" style="left:2.5px;top:9.4px;width:32.3px;height:18.1px;background:#2b2c2c;overflow:hidden"><svg width="33" height="18" viewBox="0 0 33 18"><g stroke="#e0d030" stroke-width="0.8"><line x1="8" y1="2" x2="10" y2="5"/><line x1="23" y1="2" x2="21" y2="5"/><line x1="6" y1="15" x2="10" y2="13"/><line x1="26" y1="15" x2="22" y2="13"/><line x1="4" y1="9" x2="7" y2="9"/><line x1="28" y1="9" x2="25" y2="9"/></g><ellipse cx="16" cy="9" rx="8" ry="4.5" fill="#d8342a"/><ellipse cx="16" cy="9" rx="6" ry="2.8" fill="#f0b020"/><text x="16" y="10.5" text-anchor="middle" font-family="Liberation Sans" font-weight="bold" font-size="3.6" fill="#d8342a">POW</text></svg></div></div></div>
<div id="ttb" class="a"><svg class="a" style="left:8.2px;top:7.199999999999989px" width="10" height="10" viewBox="0 0 10 10"><g fill="none" stroke="#8a8a8a" stroke-width="0.8"><rect x="1.4" y="1.4" width="7.2" height="7.2" rx="0.8" fill="#e4e4e4"/><path d="M2 3H8M2 5H8M2 7H8M3 2V8M5 2V8M7 2V8" stroke="#bbb" stroke-width="0.5"/></g></svg><div class="t" style="left:20.5px;top:8.699999999999989px;font-size:7px;color:#555;">Background</div><svg class="a" style="left:65.8px;top:7.199999999999989px" width="10" height="10" viewBox="0 0 10 10"><g fill="none" stroke="#8a8a8a" stroke-width="0.8"><rect x="1.2" y="1.4" width="5" height="5" rx="0.6"/><rect x="3.8" y="4" width="5" height="5" rx="0.6" fill="#fff"/></g></svg><div class="t" style="left:77.9px;top:8.699999999999989px;font-size:7px;color:#555;">Foreground</div><svg class="a" style="left:122.0px;top:7.199999999999989px" width="10" height="10" viewBox="0 0 10 10"><g fill="none" stroke="#8a8a8a" stroke-width="0.8"><rect x="1.2" y="1.4" width="7.6" height="7.2" rx="0.4"/><path d="M2.8 4.2C3.6 3.6 4.4 4 4.4 4.8M5.4 4.2C6.2 3.6 7 4 7 4.8M2.8 6.6H7"/></g></svg><div class="t" style="left:134.5px;top:8.699999999999989px;font-size:7px;color:#555;">Subtitles</div><svg class="a" style="left:168.0px;top:7.199999999999989px" width="11" height="10" viewBox="0 0 10 10"><g fill="none" stroke="#8a8a8a" stroke-width="0.8"><rect x="0.8" y="2.8" width="5.4" height="4.6" rx="0.4"/><rect x="4" y="1.4" width="5.2" height="5" rx="0.4" fill="#fff"/><path d="M5.4 3H8M6.6 3V5.4"/><path d="M1.6 8.4H4"/></g></svg><div class="t" style="left:181px;top:8.699999999999989px;font-size:7px;color:#555;">TTS</div><svg class="a" style="left:200.5px;top:7.199999999999989px" width="11" height="10" viewBox="0 0 10 10"><g fill="none" stroke="#8a8a8a" stroke-width="0.8"><rect x="0.8" y="2.8" width="5.4" height="4.6" rx="0.4"/><rect x="4" y="1.4" width="5.2" height="5" rx="0.4" fill="#fff"/><path d="M5.4 3H8M6.6 3V5.4"/></g></svg><div class="t" style="left:214px;top:8.699999999999989px;font-size:7px;color:#555;">STT</div><svg class="a" style="left:231.8px;top:7.199999999999989px" width="10" height="10" viewBox="0 0 10 10"><g fill="none" stroke="#8a8a8a" stroke-width="0.8"><path d="M2 8.6V5.2C2 4 4.4 4 4.4 5.2V8.6M5.6 8.6V6.4C5.6 5.6 7.6 5.6 7.6 6.4V8.6"/><path d="M3.2 1.4L3.4 2.6M1.4 2.2L2.4 3M6.4 2L5.8 3.2M6.4 4.2L8.4 3.8"/></g></svg><div class="t" style="left:244.6px;top:8.699999999999989px;font-size:7px;color:#555;">Effects</div><svg class="a" style="left:271.4px;top:7.199999999999989px" width="10" height="10" viewBox="0 0 10 10"><g fill="none" stroke="#8a8a8a" stroke-width="0.8"><rect x="3.6" y="1" width="2.8" height="5" rx="1.4"/><path d="M2.2 4.6C2.2 7.8 7.8 7.8 7.8 4.6M5 7V9M3.4 9H6.6"/></g></svg><div class="t" style="left:284.2px;top:8.699999999999989px;font-size:7px;color:#555;">Record</div><svg class="a" style="left:313.8px;top:7.199999999999989px" width="10" height="10" viewBox="0 0 10 10"><g fill="none" stroke="#8a8a8a" stroke-width="0.8"><rect x="1.2" y="1.4" width="7.6" height="7.2"/><rect x="3.8" y="3.8" width="2.4" height="2.4"/></g></svg><div class="t" style="left:327.2px;top:8.699999999999989px;font-size:7px;color:#555;">Mask</div><svg class="a" style="left:350.4px;top:7.199999999999989px" width="10" height="10" viewBox="0 0 10 10"><g fill="none" stroke="#8a8a8a" stroke-width="0.8"><circle cx="5" cy="3.6" r="2.4"/><circle cx="3.6" cy="6.2" r="2.4"/><circle cx="6.4" cy="6.2" r="2.4"/></g></svg><div class="t" style="left:363.7px;top:8.699999999999989px;font-size:7px;color:#555;">Filter</div><svg class="a" style="left:389.5px;top:7.199999999999989px" width="10" height="10" viewBox="0 0 10 10"><g fill="none" stroke="#c8c8c8" stroke-width="0.8"><path d="M2 1.4V8.6M2 2.4H7.6L6.4 4.2L7.6 6H2"/></g></svg><div class="t" style="left:401.8px;top:8.699999999999989px;font-size:7px;color:#c4c4c4;">Align</div><svg class="a" style="left:481.9px;top:7.1px" width="10" height="10" viewBox="0 0 10 10"><path d="M1.2 4.2A4.2 4.2 0 1 1 2.2 8.2" fill="none" stroke="#555" stroke-width="0.9"/><path d="M-0.2 3.6L2.6 3.4L1.2 6Z" fill="#555"/><path d="M4.2 3.3L7 5L4.2 6.7Z" fill="#555"/></svg><svg class="a" style="left:509.8px;top:7.9999999999999885px" width="9" height="9" viewBox="0 0 9 9"><path d="M0.2 0L7.8 4.2L0.2 8.4Z" fill="#555"/></svg><svg class="a" style="left:533.3px;top:7.199999999999989px" width="10" height="10" viewBox="0 0 10 10"><g fill="none" stroke="#555" stroke-width="0.8"><path d="M1.8 8.2L8.2 1.8" stroke-width="0.9"/><path d="M0.9 6.2V9.1H3.8ZM9.1 3.8V0.9H6.2Z" fill="#555"/></g></svg><div class="t" style="left:552.3px;top:9.55px;font-size:7.5px;color:#888;">00:11.28</div><div class="t" style="left:589.7px;top:9.55px;font-size:7.5px;color:#888;">/ 00:27.00</div><div class="a" style="left:638px;top:5.800000000000011px;width:63.2px;height:12px;border:1px solid #e2e2e2;border-radius:2px"></div><div class="a" style="left:653.8px;top:5.800000000000011px;width:1px;height:12px;background:#e2e2e2"></div><div class="a" style="left:685.7px;top:5.800000000000011px;width:1px;height:12px;background:#e2e2e2"></div><div class="a" style="left:642.7px;top:12px;width:5px;height:1px;background:#666"></div><svg class="a" style="left:690px;top:9px" width="7" height="7" viewBox="0 0 7 7"><path d="M3.5 0.5V6.5M0.5 3.5H6.5" stroke="#666" stroke-width="1"/></svg><div class="t" style="left:656px;top:9.90px;font-size:6.8px;color:#555;font-weight:bold;letter-spacing:-0.15px">00:14.00</div><div class="a" style="left:709.4px;top:7.300000000000011px;width:16.5px;height:10px;border-radius:5px;background:#1a73e8"></div><div class="a" style="left:717px;top:8.300000000000011px;width:8px;height:8px;border-radius:4px;background:#fff"></div><svg class="a" style="left:811.0px;top:7.199999999999989px" width="10" height="10" viewBox="0 0 10 10"><g fill="none" stroke="#8a8a8a" stroke-width="0.8"><path d="M1.2 3.2H3L3.8 2H6.2L7 3.2H8.8V8.4H1.2Z"/><circle cx="5" cy="5.6" r="1.6"/></g></svg><svg class="a" style="left:827.7px;top:7.199999999999989px" width="10" height="10" viewBox="0 0 10 10"><g fill="none" stroke="#8a8a8a" stroke-width="0.8"><path d="M7.6 5.4V8.6H1.4V2.4H4.6"/><path d="M4 6L4.4 4.6L7.8 1.2L8.8 2.2L5.4 5.6Z"/></g></svg><svg class="a" style="left:844.4px;top:7.199999999999989px" width="10" height="10" viewBox="0 0 10 10"><g fill="none" stroke="#8a8a8a" stroke-width="0.8"><path d="M2 1.6H7.4M4.7 1.6V8.6M1 5H9"/><path d="M6.6 6.6L8.8 6" stroke="#ccc"/></g></svg><svg class="a" style="left:861.0px;top:7.199999999999989px" width="10" height="10" viewBox="0 0 10 10"><g fill="none" stroke="#8a8a8a" stroke-width="0.8"><path d="M1.4 1.6H7.4M4.4 1.6V8.6M6.4 5V8.6M6.4 8.6H8.6M7.8 6V8.6"/></g></svg><svg class="a" style="left:877.5px;top:7.199999999999989px" width="10" height="10" viewBox="0 0 10 10"><g fill="none" stroke="#8a8a8a" stroke-width="0.8"><path d="M1.2 2.8H8.8M1.2 7.2H8.8"/><circle cx="3" cy="2.8" r="1.2" fill="#fff"/><circle cx="7" cy="7.2" r="1.2" fill="#fff"/></g></svg><svg class="a" style="left:899.5px;top:7.199999999999989px" width="10" height="10" viewBox="0 0 10 10"><g fill="none" stroke="#8a8a8a" stroke-width="0.8"><rect x="1" y="1.8" width="8" height="6.4" rx="0.4"/><path d="M3 5H4.2M5.8 5H7" stroke-width="1.1"/></g></svg><svg class="a" style="left:916.3px;top:7.199999999999989px" width="10" height="10" viewBox="0 0 10 10"><g fill="none" stroke="#8a8a8a" stroke-width="0.8"><rect x="1" y="1.8" width="8" height="6.4" rx="0.4"/><path d="M3.4 3.8V6.2M5 3.8V6.2M6.6 3.8V6.2" stroke-width="0.5"/></g></svg><svg class="a" style="left:932.8px;top:7.199999999999989px" width="10" height="10" viewBox="0 0 10 10"><g fill="none" stroke="#8a8a8a" stroke-width="0.8"><circle cx="5" cy="5" r="4"/><path d="M3.2 5H6.8"/></g></svg><div class="a" style="left:952px;top:12px;width:45.5px;height:1px;background:#e0e0e0"></div><svg class="a" style="left:944.4px;top:7.199999999999989px" width="10" height="10" viewBox="0 0 10 10"><g fill="none" stroke="#8a8a8a" stroke-width="0.8"><circle cx="5" cy="5" r="2.4" fill="#fff" stroke="#4a90e2" stroke-width="0.9"/></g></svg><svg class="a" style="left:1003.7px;top:7.199999999999989px" width="10" height="10" viewBox="0 0 10 10"><g fill="none" stroke="#8a8a8a" stroke-width="0.8"><circle cx="5" cy="5" r="4"/><path d="M3.2 5H6.8M5 3.2V6.8"/></g></svg></div>
<div id="tl" class="a"><div class="a" style="left:0;top:16.30000000000001px;width:1018px;height:16.1px;background:#eef0f2"></div><div class="a" style="left:0;top:47.39999999999998px;width:1018px;height:0.8px;background:#e6e6e6"></div><div class="a" style="left:0;top:63.19999999999999px;width:1018px;height:0.8px;background:#e6e6e6"></div><div class="a" style="left:0;top:78.89999999999998px;width:1018px;height:0.8px;background:#e6e6e6"></div><div class="a" style="left:0;top:94.5px;width:1018px;height:0.8px;background:#e6e6e6"></div><div class="a" style="left:0;top:110.10000000000002px;width:1018px;height:0.8px;background:#e6e6e6"></div><div class="a" style="left:0;top:125.60000000000002px;width:1018px;height:0.8px;background:#e6e6e6"></div><div class="a" style="left:0;top:143.29999999999995px;width:1018px;height:0.8px;background:#e6e6e6"></div><div class="a" style="left:107px;top:0;width:0.8px;height:152px;background:#e2e2e2"></div><div class="a" style="left:1018px;top:0;width:0.8px;height:152px;background:#e2e2e2"></div><div class="a" style="left:1019.5px;top:16px;width:3.5px;height:24px;background:#c8c8c8;border-radius:2px"></div><svg class="a" style="left:4.0px;top:3.8000000000000114px" width="10" height="10" viewBox="0 0 10 10"><g fill="none" stroke="#888" stroke-width="0.8"><path d="M1.2 1.6H4L5 2.6H8.6V8.6H1.2Z"/><path d="M3.4 5.6H6.4M4.9 4.1V7.1"/></g></svg><svg class="a" style="left:17.2px;top:3.8000000000000114px" width="10" height="10" viewBox="0 0 10 10"><g fill="none" stroke="#888" stroke-width="0.8"><path d="M1.2 1.6H4L5 2.6H7V4.4M7 8.6H1.2V1.6"/><path d="M6.4 6.6H9.4M8 5.2L9.4 6.6L8 8"/></g></svg><svg class="a" style="left:31.0px;top:3.8000000000000114px" width="10" height="10" viewBox="0 0 10 10"><g fill="none" stroke="#c4c4c4" stroke-width="0.8"><path d="M2.6 1.4H7.4M5 1.4V8.4M3.4 6.8L5 8.4L6.6 6.8"/></g></svg><svg class="a" style="left:44.0px;top:3.8000000000000114px" width="10" height="10" viewBox="0 0 10 10"><g fill="none" stroke="#c4c4c4" stroke-width="0.8"><path d="M2.6 8.6H7.4M5 8.6V1.6M3.4 3.2L5 1.6L6.6 3.2"/></g></svg><svg class="a" style="left:62.0px;top:3.8000000000000114px" width="10" height="10" viewBox="0 0 10 10"><g fill="none" stroke="#c4c4c4" stroke-width="0.8"><path d="M1.6 2.4H8.4M2.6 2.4V8.6H7.4V2.4M4 2.4V1.2H6V2.4M4.2 4.2V7M5.8 4.2V7"/></g></svg><svg class="a" style="left:77.4px;top:3.8000000000000114px" width="10" height="10" viewBox="0 0 10 10"><g fill="none" stroke="#888" stroke-width="0.8"><rect x="2" y="4.4" width="6" height="4.6" rx="0.5" fill="#555" stroke="none"/><path d="M3.2 4.6V3.2C3.2 1.2 6.8 1.2 6.8 3.2V4.6" stroke="#555" stroke-width="1"/></g></svg><svg class="a" style="left:92.4px;top:3.8000000000000114px" width="10" height="10" viewBox="0 0 10 10"><g fill="none" stroke="#888" stroke-width="0.8"><path d="M0.8 5C2.4 2.4 7.6 2.4 9.2 5C7.6 7.6 2.4 7.6 0.8 5Z" fill="#fff" stroke="#555" stroke-width="1"/><circle cx="5" cy="5" r="1.4" fill="#555" stroke="none"/></g></svg><svg class="a" style="left:0;top:0" width="1024" height="152" viewBox="0 400 1024 152"><g stroke="#cfcfcf" stroke-width="0.6"><line x1="107.20" y1="410.5" x2="107.20" y2="416"/><line x1="113.71" y1="413.8" x2="113.71" y2="416"/><line x1="120.22" y1="413.8" x2="120.22" y2="416"/><line x1="126.73" y1="413.8" x2="126.73" y2="416"/><line x1="133.24" y1="413.8" x2="133.24" y2="416"/><line x1="139.75" y1="412.5" x2="139.75" y2="416"/><line x1="146.26" y1="413.8" x2="146.26" y2="416"/><line x1="152.77" y1="413.8" x2="152.77" y2="416"/><line x1="159.28" y1="413.8" x2="159.28" y2="416"/><line x1="165.79" y1="413.8" x2="165.79" y2="416"/><line x1="172.30" y1="410.5" x2="172.30" y2="416"/><line x1="178.81" y1="413.8" x2="178.81" y2="416"/><line x1="185.32" y1="413.8" x2="185.32" y2="416"/><line x1="191.83" y1="413.8" x2="191.83" y2="416"/><line x1="198.34" y1="413.8" x2="198.34" y2="416"/><line x1="204.85" y1="412.5" x2="204.85" y2="416"/><line x1="211.36" y1="413.8" x2="211.36" y2="416"/><line x1="217.87" y1="413.8" x2="217.87" y2="416"/><line x1="224.38" y1="413.8" x2="224.38" y2="416"/><line x1="230.89" y1="413.8" x2="230.89" y2="416"/><line x1="237.40" y1="410.5" x2="237.40" y2="416"/><line x1="243.91" y1="413.8" x2="243.91" y2="416"/><line x1="250.42" y1="413.8" x2="250.42" y2="416"/><line x1="256.93" y1="413.8" x2="256.93" y2="416"/><line x1="263.44" y1="413.8" x2="263.44" y2="416"/><line x1="269.95" y1="412.5" x2="269.95" y2="416"/><line x1="276.46" y1="413.8" x2="276.46" y2="416"/><line x1="282.97" y1="413.8" x2="282.97" y2="416"/><line x1="289.48" y1="413.8" x2="289.48" y2="416"/><line x1="295.99" y1="413.8" x2="295.99" y2="416"/><line x1="302.50" y1="410.5" x2="302.50" y2="416"/><line x1="309.01" y1="413.8" x2="309.01" y2="416"/><line x1="315.52" y1="413.8" x2="315.52" y2="416"/><line x1="322.03" y1="413.8" x2="322.03" y2="416"/><line x1="328.54" y1="413.8" x2="328.54" y2="416"/><line x1="335.05" y1="412.5" x2="335.05" y2="416"/><line x1="341.56" y1="413.8" x2="341.56" y2="416"/><line x1="348.07" y1="413.8" x2="348.07" y2="416"/><line x1="354.58" y1="413.8" x2="354.58" y2="416"/><line x1="361.09" y1="413.8" x2="361.09" y2="416"/><line x1="367.60" y1="410.5" x2="367.60" y2="416"/><line x1="374.11" y1="413.8" x2="374.11" y2="416"/><line x1="380.62" y1="413.8" x2="380.62" y2="416"/><line x1="387.13" y1="413.8" x2="387.13" y2="416"/><line x1="393.64" y1="413.8" x2="393.64" y2="416"/><line x1="400.15" y1="412.5" x2="400.15" y2="416"/><line x1="406.66" y1="413.8" x2="406.66" y2="416"/><line x1="413.17" y1="413.8" x2="413.17" y2="416"/><line x1="419.68" y1="413.8" x2="419.68" y2="416"/><line x1="426.19" y1="413.8" x2="426.19" y2="416"/><line x1="432.70" y1="410.5" x2="432.70" y2="416"/><line x1="439.21" y1="413.8" x2="439.21" y2="416"/><line x1="445.72" y1="413.8" x2="445.72" y2="416"/><line x1="452.23" y1="413.8" x2="452.23" y2="416"/><line x1="458.74" y1="413.8" x2="458.74" y2="416"/><line x1="465.25" y1="412.5" x2="465.25" y2="416"/><line x1="471.76" y1="413.8" x2="471.76" y2="416"/><line x1="478.27" y1="413.8" x2="478.27" y2="416"/><line x1="484.78" y1="413.8" x2="484.78" y2="416"/><line x1="491.29" y1="413.8" x2="491.29" y2="416"/><line x1="497.80" y1="410.5" x2="497.80" y2="416"/><line x1="504.31" y1="413.8" x2="504.31" y2="416"/><line x1="510.82" y1="413.8" x2="510.82" y2="416"/><line x1="517.33" y1="413.8" x2="517.33" y2="416"/><line x1="523.84" y1="413.8" x2="523.84" y2="416"/><line x1="530.35" y1="412.5" x2="530.35" y2="416"/><line x1="536.86" y1="413.8" x2="536.86" y2="416"/><line x1="543.37" y1="413.8" x2="543.37" y2="416"/><line x1="549.88" y1="413.8" x2="549.88" y2="416"/><line x1="556.39" y1="413.8" x2="556.39" y2="416"/><line x1="562.90" y1="410.5" x2="562.90" y2="416"/><line x1="569.41" y1="413.8" x2="569.41" y2="416"/><line x1="575.92" y1="413.8" x2="575.92" y2="416"/><line x1="582.43" y1="413.8" x2="582.43" y2="416"/><line x1="588.94" y1="413.8" x2="588.94" y2="416"/><line x1="595.45" y1="412.5" x2="595.45" y2="416"/><line x1="601.96" y1="413.8" x2="601.96" y2="416"/><line x1="608.47" y1="413.8" x2="608.47" y2="416"/><line x1="614.98" y1="413.8" x2="614.98" y2="416"/><line x1="621.49" y1="413.8" x2="621.49" y2="416"/><line x1="628.00" y1="410.5" x2="628.00" y2="416"/><line x1="634.51" y1="413.8" x2="634.51" y2="416"/><line x1="641.02" y1="413.8" x2="641.02" y2="416"/><line x1="647.53" y1="413.8" x2="647.53" y2="416"/><line x1="654.04" y1="413.8" x2="654.04" y2="416"/><line x1="660.55" y1="412.5" x2="660.55" y2="416"/><line x1="667.06" y1="413.8" x2="667.06" y2="416"/><line x1="673.57" y1="413.8" x2="673.57" y2="416"/><line x1="680.08" y1="413.8" x2="680.08" y2="416"/><line x1="686.59" y1="413.8" x2="686.59" y2="416"/><line x1="693.10" y1="410.5" x2="693.10" y2="416"/><line x1="699.61" y1="413.8" x2="699.61" y2="416"/><line x1="706.12" y1="413.8" x2="706.12" y2="416"/><line x1="712.63" y1="413.8" x2="712.63" y2="416"/><line x1="719.14" y1="413.8" x2="719.14" y2="416"/><line x1="725.65" y1="412.5" x2="725.65" y2="416"/><line x1="732.16" y1="413.8" x2="732.16" y2="416"/><line x1="738.67" y1="413.8" x2="738.67" y2="416"/><line x1="745.18" y1="413.8" x2="745.18" y2="416"/><line x1="751.69" y1="413.8" x2="751.69" y2="416"/><line x1="758.20" y1="410.5" x2="758.20" y2="416"/><line x1="764.71" y1="413.8" x2="764.71" y2="416"/><line x1="771.22" y1="413.8" x2="771.22" y2="416"/><line x1="777.73" y1="413.8" x2="777.73" y2="416"/><line x1="784.24" y1="413.8" x2="784.24" y2="416"/><line x1="790.75" y1="412.5" x2="790.75" y2="416"/><line x1="797.26" y1="413.8" x2="797.26" y2="416"/><line x1="803.77" y1="413.8" x2="803.77" y2="416"/><line x1="810.28" y1="413.8" x2="810.28" y2="416"/><line x1="816.79" y1="413.8" x2="816.79" y2="416"/><line x1="823.30" y1="410.5" x2="823.30" y2="416"/><line x1="829.81" y1="413.8" x2="829.81" y2="416"/><line x1="836.32" y1="413.8" x2="836.32" y2="416"/><line x1="842.83" y1="413.8" x2="842.83" y2="416"/><line x1="849.34" y1="413.8" x2="849.34" y2="416"/><line x1="855.85" y1="412.5" x2="855.85" y2="416"/><line x1="862.36" y1="413.8" x2="862.36" y2="416"/><line x1="868.87" y1="413.8" x2="868.87" y2="416"/><line x1="875.38" y1="413.8" x2="875.38" y2="416"/><line x1="881.89" y1="413.8" x2="881.89" y2="416"/><line x1="888.40" y1="410.5" x2="888.40" y2="416"/><line x1="894.91" y1="413.8" x2="894.91" y2="416"/><line x1="901.42" y1="413.8" x2="901.42" y2="416"/><line x1="907.93" y1="413.8" x2="907.93" y2="416"/><line x1="914.44" y1="413.8" x2="914.44" y2="416"/><line x1="920.95" y1="412.5" x2="920.95" y2="416"/><line x1="927.46" y1="413.8" x2="927.46" y2="416"/><line x1="933.97" y1="413.8" x2="933.97" y2="416"/><line x1="940.48" y1="413.8" x2="940.48" y2="416"/><line x1="946.99" y1="413.8" x2="946.99" y2="416"/><line x1="953.50" y1="410.5" x2="953.50" y2="416"/><line x1="960.01" y1="413.8" x2="960.01" y2="416"/><line x1="966.52" y1="413.8" x2="966.52" y2="416"/><line x1="973.03" y1="413.8" x2="973.03" y2="416"/><line x1="979.54" y1="413.8" x2="979.54" y2="416"/><line x1="986.05" y1="412.5" x2="986.05" y2="416"/><line x1="992.56" y1="413.8" x2="992.56" y2="416"/><line x1="999.07" y1="413.8" x2="999.07" y2="416"/><line x1="1005.58" y1="413.8" x2="1005.58" y2="416"/><line x1="1012.09" y1="413.8" x2="1012.09" y2="416"/></g></svg><div class="t" style="left:109.8px;top:2.5000000000000226px;font-size:6.6px;color:#333;font-family:'Liberation Serif',serif;font-weight:bold">0s</div><div class="t" style="left:169.70000000000002px;top:2.5000000000000226px;font-size:6.6px;color:#333;font-family:'Liberation Serif',serif;font-weight:bold">1s</div><div class="t" style="left:234.79999999999998px;top:2.5000000000000226px;font-size:6.6px;color:#333;font-family:'Liberation Serif',serif;font-weight:bold">2s</div><div class="t" style="left:299.9px;top:2.5000000000000226px;font-size:6.6px;color:#333;font-family:'Liberation Serif',serif;font-weight:bold">3s</div><div class="t" style="left:364.99999999999994px;top:2.5000000000000226px;font-size:6.6px;color:#333;font-family:'Liberation Serif',serif;font-weight:bold">4s</div><div class="t" style="left:430.09999999999997px;top:2.5000000000000226px;font-size:6.6px;color:#333;font-family:'Liberation Serif',serif;font-weight:bold">5s</div><div class="t" style="left:495.19999999999993px;top:2.5000000000000226px;font-size:6.6px;color:#333;font-family:'Liberation Serif',serif;font-weight:bold">6s</div><div class="t" style="left:560.3px;top:2.5000000000000226px;font-size:6.6px;color:#333;font-family:'Liberation Serif',serif;font-weight:bold">7s</div><div class="t" style="left:625.4px;top:2.5000000000000226px;font-size:6.6px;color:#333;font-family:'Liberation Serif',serif;font-weight:bold">8s</div><div class="t" style="left:690.5px;top:2.5000000000000226px;font-size:6.6px;color:#333;font-family:'Liberation Serif',serif;font-weight:bold">9s</div><div class="t" style="left:753.7px;top:2.5000000000000226px;font-size:6.6px;color:#333;font-family:'Liberation Serif',serif;font-weight:bold">10s</div><div class="t" style="left:818.8px;top:2.5000000000000226px;font-size:6.6px;color:#333;font-family:'Liberation Serif',serif;font-weight:bold">11s</div><div class="t" style="left:883.9px;top:2.5000000000000226px;font-size:6.6px;color:#333;font-family:'Liberation Serif',serif;font-weight:bold">12s</div><div class="t" style="left:949.0px;top:2.5000000000000226px;font-size:6.6px;color:#333;font-family:'Liberation Serif',serif;font-weight:bold">13s</div><div class="t" style="left:1002.5px;top:2.5000000000000226px;font-size:6.6px;color:#333;font-family:'Liberation Serif',serif;font-weight:bold">14s</div><div class="t" style="left:19.9px;top:21.100000000000023px;font-size:7px;color:#444;">Camera</div><div class="a" style="left:79px;top:24.00000000000002px;width:2px;height:2px;border-radius:50%;background:#888"></div><div class="a" style="left:94px;top:24.00000000000002px;width:2px;height:2px;border-radius:50%;background:#888"></div><div class="t" style="left:19.9px;top:36.60000000000002px;font-size:7px;color:#444;">symbol</div><div class="a" style="left:79px;top:39.50000000000002px;width:2px;height:2px;border-radius:50%;background:#888"></div><div class="a" style="left:94px;top:39.50000000000002px;width:2px;height:2px;border-radius:50%;background:#888"></div><div class="t" style="left:19.9px;top:52.10000000000002px;font-size:7px;color:#444;">symbol</div><div class="a" style="left:79px;top:55.00000000000002px;width:2px;height:2px;border-radius:50%;background:#888"></div><div class="a" style="left:94px;top:55.00000000000002px;width:2px;height:2px;border-radius:50%;background:#888"></div><div class="t" style="left:19.9px;top:67.60000000000002px;font-size:7px;color:#444;">symbol</div><div class="a" style="left:79px;top:70.50000000000003px;width:2px;height:2px;border-radius:50%;background:#888"></div><div class="a" style="left:94px;top:70.50000000000003px;width:2px;height:2px;border-radius:50%;background:#888"></div><div class="t" style="left:19.9px;top:83.10000000000002px;font-size:7px;color:#444;">symbol</div><div class="a" style="left:79px;top:86.00000000000003px;width:2px;height:2px;border-radius:50%;background:#888"></div><div class="a" style="left:94px;top:86.00000000000003px;width:2px;height:2px;border-radius:50%;background:#888"></div><div class="t" style="left:19.9px;top:98.69999999999999px;font-size:7px;color:#444;">Rounded Rectang</div><div class="a" style="left:79px;top:101.6px;width:2px;height:2px;border-radius:50%;background:#888"></div><div class="a" style="left:94px;top:101.6px;width:2px;height:2px;border-radius:50%;background:#888"></div><div class="t" style="left:19.9px;top:114.29999999999995px;font-size:7px;color:#444;">Rounded Rectang</div><div class="a" style="left:79px;top:117.19999999999996px;width:2px;height:2px;border-radius:50%;background:#888"></div><div class="a" style="left:94px;top:117.19999999999996px;width:2px;height:2px;border-radius:50%;background:#888"></div><div class="t" style="left:19.9px;top:135.80px;font-size:7px;color:#444;">Male Teacher</div><div class="a" style="left:79px;top:137.79999999999998px;width:2px;height:2px;border-radius:50%;background:#888"></div><div class="a" style="left:94px;top:137.79999999999998px;width:2px;height:2px;border-radius:50%;background:#888"></div><svg class="a" style="left:3.0px;top:19.100000000000023px" width="10" height="11" viewBox="0 0 10 10"><g fill="none" stroke="#888" stroke-width="0.8"><rect x="0" y="2.6" width="7.6" height="6" fill="#e2e2e2" stroke="#999"/><path d="M9.2 3.4V8"/></g></svg><svg class="a" style="left:3.1999999999999993px;top:35.10000000000002px" width="10" height="10" viewBox="0 0 10 10"><g fill="none" stroke="#999" stroke-width="0.8"><path d="M1 3L9 1L6.6 9L5 5.6Z M1 3L5 5.6"/><path d="M3.6 7L2 8.6" stroke-width="0.6"/></g></svg><svg class="a" style="left:3.1999999999999993px;top:50.60000000000002px" width="10" height="10" viewBox="0 0 10 10"><g fill="none" stroke="#999" stroke-width="0.8"><path d="M1 3L9 1L6.6 9L5 5.6Z M1 3L5 5.6"/><path d="M3.6 7L2 8.6" stroke-width="0.6"/></g></svg><svg class="a" style="left:3.1999999999999993px;top:66.10000000000002px" width="10" height="10" viewBox="0 0 10 10"><g fill="none" stroke="#999" stroke-width="0.8"><path d="M1 3L9 1L6.6 9L5 5.6Z M1 3L5 5.6"/><path d="M3.6 7L2 8.6" stroke-width="0.6"/></g></svg><svg class="a" style="left:3.1999999999999993px;top:81.60000000000002px" width="10" height="10" viewBox="0 0 10 10"><g fill="none" stroke="#999" stroke-width="0.8"><path d="M1 3L9 1L6.6 9L5 5.6Z M1 3L5 5.6"/><path d="M3.6 7L2 8.6" stroke-width="0.6"/></g></svg><svg class="a" style="left:3.0px;top:97.19999999999999px" width="10" height="10" viewBox="0 0 10 10"><g fill="none" stroke="#999" stroke-width="0.8"><path d="M1.4 8.6V1.6H7.6"/><circle cx="6" cy="6.2" r="2.8" fill="#555" stroke="none"/></g></svg><svg class="a" style="left:3.0px;top:112.79999999999995px" width="10" height="10" viewBox="0 0 10 10"><g fill="none" stroke="#999" stroke-width="0.8"><path d="M1.4 8.6V1.6H7.6"/><circle cx="6" cy="6.2" r="2.8" fill="#555" stroke="none"/></g></svg><svg class="a" style="left:3.0px;top:131.89999999999998px" width="10" height="11" viewBox="0 0 10 10"><g fill="none" stroke="#999" stroke-width="0.8"><circle cx="5" cy="2.4" r="1.6"/><path d="M2.4 9.4V5.2C2.4 4.2 7.6 4.2 7.6 5.2V9.4M4 9.4V7M6 9.4V7"/></g></svg><div class="a" style="left:61.9px;top:20.100000000000023px;width:9px;height:9px;border-radius:5px;background:#2a78d2;color:#fff;font-size:7.5px;font-weight:bold;text-align:center;line-height:9.4px">?</div><div class="t" style="left:0px;top:145.39999999999998px;font-size:7px;color:#444;">Current Scene: 01</div><svg class="a" style="left:92.5px;top:144.0px" width="10" height="10" viewBox="0 0 10 10"><g fill="none" stroke="#777" stroke-width="0.8"><rect x="1.4" y="2" width="5" height="7" fill="#fff"/><rect x="4" y="3.4" width="4.6" height="6" fill="#fff"/><path d="M5 5H7.6M5 6.6H7.6"/></g></svg><div class="a bar cam" style="left:108px;top:18.30000000000001px;width:129.5px;height:12.599999999999966px;line-height:14.20px">Default Camera</div><svg class="a" style="left:251.2px;top:19.600000000000023px" width="10" height="10" viewBox="0 0 10 10"><path d="M5 0.5L9.5 5L5 9.5L0.5 5Z" fill="#fff" stroke="#5cb15c" stroke-width="1.5"/><path d="M5 2.9V7.1M2.9 5H7.1" stroke="#5cb15c" stroke-width="1.3"/></svg><div class="a bar" style="left:853.6px;top:34.30000000000001px;width:52.0px;height:11.399999999999977px;line-height:13.00px">Hatch</div><svg class="a" style="left:919.9px;top:35.0px" width="10" height="10" viewBox="0 0 10 10"><path d="M5 0.5L9.5 5L5 9.5L0.5 5Z" fill="#fff" stroke="#5cb15c" stroke-width="1.5"/><path d="M5 2.9V7.1M2.9 5H7.1" stroke="#5cb15c" stroke-width="1.3"/></svg><div class="a bar" style="left:952.5px;top:34.30000000000001px;width:32.299999999999955px;height:11.399999999999977px;line-height:13.00px">None</div><div class="a bar" style="left:811.2px;top:49.60000000000002px;width:51.89999999999998px;height:11.5px;line-height:13.10px">Hatch</div><svg class="a" style="left:877.4px;top:50.35000000000002px" width="10" height="10" viewBox="0 0 10 10"><path d="M5 0.5L9.5 5L5 9.5L0.5 5Z" fill="#fff" stroke="#5cb15c" stroke-width="1.5"/><path d="M5 2.9V7.1M2.9 5H7.1" stroke="#5cb15c" stroke-width="1.3"/></svg><div class="a bar" style="left:952.5px;top:49.60000000000002px;width:32.299999999999955px;height:11.5px;line-height:13.10px">None</div><div class="a bar" style="left:839.4px;top:65px;width:51.89999999999998px;height:11.800000000000011px;line-height:13.40px">Hatch</div><svg class="a" style="left:905.3px;top:65.89999999999998px" width="10" height="10" viewBox="0 0 10 10"><path d="M5 0.5L9.5 5L5 9.5L0.5 5Z" fill="#fff" stroke="#5cb15c" stroke-width="1.5"/><path d="M5 2.9V7.1M2.9 5H7.1" stroke="#5cb15c" stroke-width="1.3"/></svg><div class="a bar" style="left:952.5px;top:65px;width:32.299999999999955px;height:11.800000000000011px;line-height:13.40px">None</div><div class="a bar" style="left:825.4px;top:80.39999999999998px;width:52.0px;height:11.800000000000011px;line-height:13.40px">Hatch</div><svg class="a" style="left:892px;top:81.29999999999995px" width="10" height="10" viewBox="0 0 10 10"><path d="M5 0.5L9.5 5L5 9.5L0.5 5Z" fill="#fff" stroke="#5cb15c" stroke-width="1.5"/><path d="M5 2.9V7.1M2.9 5H7.1" stroke="#5cb15c" stroke-width="1.3"/></svg><div class="a bar" style="left:952.5px;top:80.39999999999998px;width:32.299999999999955px;height:11.800000000000011px;line-height:13.40px">None</div><div class="a bar" style="left:737.8px;top:96px;width:52.0px;height:12px;line-height:13.60px">Bounce In Dow</div><svg class="a" style="left:803.5px;top:97.0px" width="10" height="10" viewBox="0 0 10 10"><path d="M5 0.5L9.5 5L5 9.5L0.5 5Z" fill="#fff" stroke="#5cb15c" stroke-width="1.5"/><path d="M5 2.9V7.1M2.9 5H7.1" stroke="#5cb15c" stroke-width="1.3"/></svg><div class="a bar" style="left:953px;top:96px;width:32.700000000000045px;height:12px;line-height:13.60px">None</div><div class="a bar" style="left:737.8px;top:111.60000000000002px;width:52.0px;height:11.799999999999955px;line-height:13.40px">Bounce In Dow</div><svg class="a" style="left:803.5px;top:112.5px" width="10" height="10" viewBox="0 0 10 10"><path d="M5 0.5L9.5 5L5 9.5L0.5 5Z" fill="#fff" stroke="#5cb15c" stroke-width="1.5"/><path d="M5 2.9V7.1M2.9 5H7.1" stroke="#5cb15c" stroke-width="1.3"/></svg><div class="a bar" style="left:953px;top:111.60000000000002px;width:32.700000000000045px;height:11.799999999999955px;line-height:13.40px">None</div><div class="a bar" style="left:221.6px;top:126px;width:51.79999999999998px;height:11.700000000000045px;line-height:13.30px">Side Up</div><div class="a bar" style="left:743.8px;top:125.39999999999998px;width:22.800000000000068px;height:12.300000000000068px;line-height:13.90px">Move</div><svg class="a" style="left:780.3px;top:126.5px" width="10" height="10" viewBox="0 0 10 10"><path d="M5 0.5L9.5 5L5 9.5L0.5 5Z" fill="#fff" stroke="#5cb15c" stroke-width="1.5"/><path d="M5 2.9V7.1M2.9 5H7.1" stroke="#5cb15c" stroke-width="1.3"/></svg><div class="a bar" style="left:954.6px;top:126.20000000000005px;width:32.0px;height:12.0px;line-height:13.60px">None</div><div class="a" style="left:221.6px;top:139.20000000000005px;width:156.1px;height:4.2px;background:#8e95dc;overflow:hidden"><div class="a" style="right:0;top:0.6px;width:11px;height:8px;border-radius:5.5px 5.5px 0 0;background:#4b4a78"></div></div><div class="a" style="left:377.7px;top:139.20000000000005px;width:127.30000000000001px;height:4.2px;background:#aa8bda;overflow:hidden"><div class="a" style="right:0;top:0.6px;width:11px;height:8px;border-radius:5.5px 5.5px 0 0;background:#4b4a78"></div></div><div class="a" style="left:505px;top:139.20000000000005px;width:125px;height:4.2px;background:#8e95dc;overflow:hidden"><div class="a" style="right:0;top:0.6px;width:11px;height:8px;border-radius:5.5px 5.5px 0 0;background:#4b4a78"></div></div><div class="a" style="left:630px;top:139.20000000000005px;width:115.5px;height:4.2px;background:#aa8bda;overflow:hidden"><div class="a" style="right:0;top:0.6px;width:11px;height:8px;border-radius:5.5px 5.5px 0 0;background:#4b4a78"></div></div><div class="a" style="left:768px;top:139.20000000000005px;width:97.5px;height:4.2px;background:#8e95dc;overflow:hidden"><div class="a" style="right:0;top:0.6px;width:11px;height:8px;border-radius:5.5px 5.5px 0 0;background:#4b4a78"></div></div><div class="a" style="left:865.5px;top:139.20000000000005px;width:113.39999999999998px;height:4.2px;background:#aa8bda;overflow:hidden"><div class="a" style="right:0;top:0.6px;width:11px;height:8px;border-radius:5.5px 5.5px 0 0;background:#4b4a78"></div></div><svg class="a" style="left:983.7px;top:139.39999999999998px" width="10" height="5" viewBox="0 0 10 5"><path d="M5 1L8.6 4.6H1.4Z" fill="#fff" stroke="#5bb35b" stroke-width="1.1"/></svg><div class="a" style="left:840.6px;top:16px;width:1px;height:127.39999999999998px;background:#e05454"></div><svg class="a" style="left:836px;top:4.600000000000023px" width="10" height="12" viewBox="0 0 10 12"><path d="M0 1.5C0 0.6 0.6 0 1.5 0H8.5C9.4 0 10 0.6 10 1.5V8L5 11.8L0 8Z" fill="#3a84db"/><path d="M3.8 3V7M6.2 3V7" stroke="#fff" stroke-width="0.9" opacity="0.8"/></svg></div>
</body></html>
